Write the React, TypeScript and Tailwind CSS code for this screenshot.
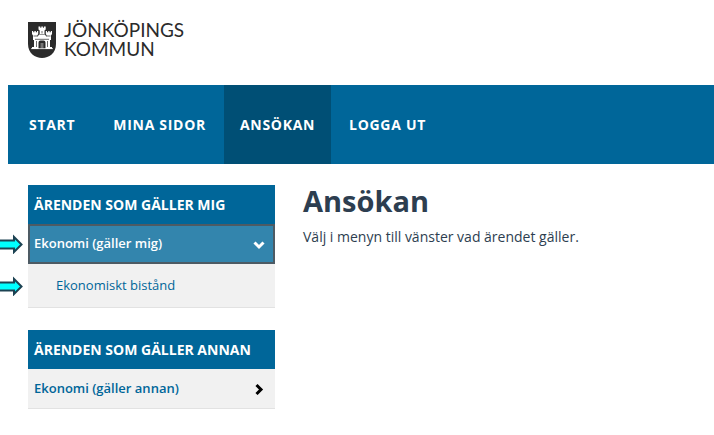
import React from "react";

function Crest() {
  return (
    <svg viewBox="0 0 28 36" className="h-9 w-7 shrink-0" aria-hidden="true">
      <path d="M0 0H28V22C28 31 21 36 14 36S0 31 0 22Z" fill="#2b2b2b" />
      <g fill="#fff">
        <path d="M10.500 4.500h1.800v1.300h1V4.500h1.600v1.300h1V4.500h1.800v3l-1.200 1V12h-4.800V8.500l-1.200-1Z" />
        <path d="M4 9h1.200v1.200h1.200V9h1.400v1.200H9V9h1.200v3l-1 1.500V15l2-2.500h5.600l2 2.500v-1.500l-1-1.500V9H19v1.200h1.200V9h1.400v1.200h1.200V9H24v3l-1 1.500V18h-1v7h2v2h-6.500v-6.500a2 2 0 0 0-2-2h-3a2 2 0 0 0-2 2V27H4v-2h2v-7H5v-4.500L4 12Z" />
        <path d="M3 26.300h22v.8H3Z" />
        <path d="M12.500 21h3v5.500h-3Z" opacity=".35" />
      </g>
      <path d="M5.500 14h3.500M19 14h3.500M7 17.300h14" stroke="#2b2b2b" strokeWidth=".7" />
      <path d="M8.500 19v6M19.500 19v6M14 9v2.500" stroke="#2b2b2b" strokeWidth=".7" />
    </svg>
  );
}

function Pointer() {
  return (
    <svg
      viewBox="0 0 24 20"
      className="absolute -left-7 top-1/2 h-5 w-6 -translate-y-1/2"
      aria-hidden="true"
    >
      <path
        d="M-2 6.500H14V3L21.500 10.500L14 18V14.500H-2Z"
        fill="#00ffff"
        stroke="#1c4252"
        strokeWidth="2"
      />
    </svg>
  );
}

function Chevron({ down = false }: { down?: boolean }) {
  return (
    <svg viewBox="0 0 12 12" className="h-3 w-3" fill="none" stroke="currentColor" strokeWidth="3" aria-hidden="true">
      <path d={down ? "M1.500 4.500L6 9L10.500 4.500" : "M3.500 2L8 6.500L3.500 11"} />
    </svg>
  );
}

function GroupTitle({ children }: { children: React.ReactNode }) {
  return (
    <h2 className="bg-[#006699] px-1.5 pt-2.5 pb-[9px] text-[14px] font-bold leading-5 whitespace-nowrap text-white">
      {children}
    </h2>
  );
}

const navLink = "flex items-center px-4 hover:bg-[#004f75]";

export default function App() {
  return (
    <div className="min-h-screen bg-white font-['Open_Sans','Noto_Sans',sans-serif] text-[#2d3e50]">
      <header>
        <a href="#" className="ml-7 flex h-[85px] w-fit items-start gap-2 pt-5">
          <span className="pt-0.5">
            <Crest />
          </span>
          <span className="font-['Lato','Open_Sans',sans-serif] text-[19px] leading-[19px] text-[#2b2b2b]">
            <span className="block">JÖNKÖPINGS</span>
            <span className="block">KOMMUN</span>
          </span>
        </a>
        <nav className="ml-2 flex h-[79px] gap-0.5 bg-[#006699] pl-[5px] text-sm font-bold tracking-wider text-white">
          <a href="#" className={`${navLink} mr-1`}>START</a>
          <a href="#" className={navLink}>MINA SIDOR</a>
          <a href="#" aria-current="page" className="flex items-center bg-[#004f75] px-4">ANSÖKAN</a>
          <a href="#" className={navLink}>LOGGA UT</a>
        </nav>
      </header>

      <div className="flex gap-7 pt-[21px] pl-7">
        <aside className="w-[247px] shrink-0 space-y-[22px]">
          <section>
            <GroupTitle>ÄRENDEN SOM GÄLLER MIG</GroupTitle>
            <div className="relative">
              <button
                type="button"
                aria-expanded="true"
                className="flex h-10 w-full items-center justify-between border-2 border-[#4d5b64] bg-[#3385ad] pr-2 pl-1 text-[13px] font-semibold text-white"
              >
                Ekonomi (gäller mig)
                <Chevron down />
              </button>
              <Pointer />
            </div>
            <div className="relative">
              <a
                href="#"
                className="flex h-11 items-center border-b border-[#e2e2e2] bg-[#f1f1f1] pl-7 text-[13px] text-[#006699]"
              >
                Ekonomiskt bistånd
              </a>
              <Pointer />
            </div>
          </section>
          <section>
            <GroupTitle>ÄRENDEN SOM GÄLLER ANNAN</GroupTitle>
            <button
              type="button"
              aria-expanded="false"
              className="flex h-10 w-full items-center justify-between border-b border-[#e2e2e2] bg-[#f1f1f1] pr-2.5 pl-1.5 text-[13px] font-semibold text-[#006699]"
            >
              Ekonomi (gäller annan)
              <span className="text-black"><Chevron /></span>
            </button>
          </section>
        </aside>
        <main>
          <h1 className="text-[29px] font-bold leading-8">Ansökan</h1>
          <p className="mt-2 text-[14px] leading-6">Välj i menyn till vänster vad ärendet gäller.</p>
        </main>
      </div>
    </div>
  );
}
